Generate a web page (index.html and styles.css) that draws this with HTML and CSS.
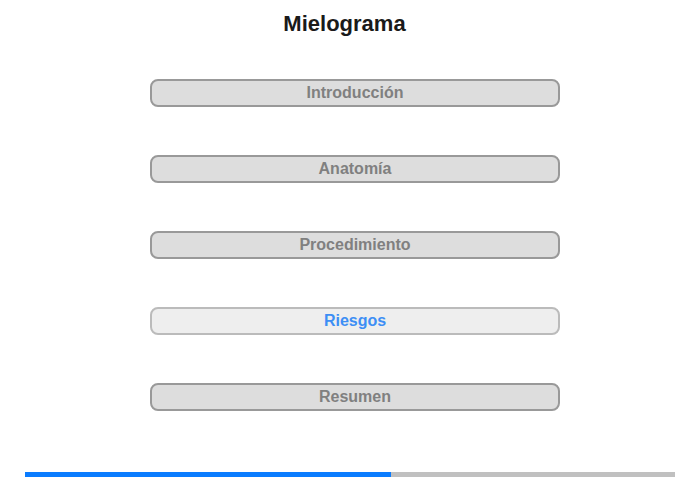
FILE: index.html
```html
<!DOCTYPE html>
<html lang="es">
<head>
<meta charset="utf-8">
<title>Mielograma</title>
<link rel="stylesheet" href="styles.css">
</head>
<body>
<div class="page">
  <h1 class="title">Mielograma</h1>
  <nav class="menu">
    <div class="item">Introducción</div>
    <div class="item">Anatomía</div>
    <div class="item">Procedimiento</div>
    <div class="item current">Riesgos</div>
    <div class="item">Resumen</div>
  </nav>
  <div class="progress"><div class="progress-fill" style="width:56.3%"></div></div>
</div>
</body>
</html>
```
FILE: styles.css
```css
html, body {
  margin: 0;
  padding: 0;
  background: #fff;
  font-family: "Liberation Sans", Arial, sans-serif;
}
.page {
  width: 700px;
  height: 480px;
  display: flex;
  flex-direction: column;
}
.title {
  margin: 0;
  padding: 11px 0 0 0;
  padding-right: 11px;
  text-align: center;
  font-size: 22px;
  font-weight: bold;
  color: #1a1a1a;
  line-height: 25px;
}
.menu {
  display: flex;
  flex-direction: column;
  gap: 48px;
  margin-top: 43px;
  margin-left: 150px;
  width: 410px;
}
.item {
  box-sizing: border-box;
  height: 28px;
  border: 2px solid #999;
  border-radius: 8px;
  background: #ddd;
  color: #808080;
  font-size: 16px;
  font-weight: bold;
  display: flex;
  align-items: center;
  justify-content: center;
}
.item.current {
  background: #eee;
  border-color: #bbb;
  color: #3d8ef5;
}
.progress {
  margin: auto 25px 3px 25px;
  height: 5px;
  background: #c0c0c0;
}
.progress-fill {
  height: 100%;
  background: #0a7cff;
}
```
